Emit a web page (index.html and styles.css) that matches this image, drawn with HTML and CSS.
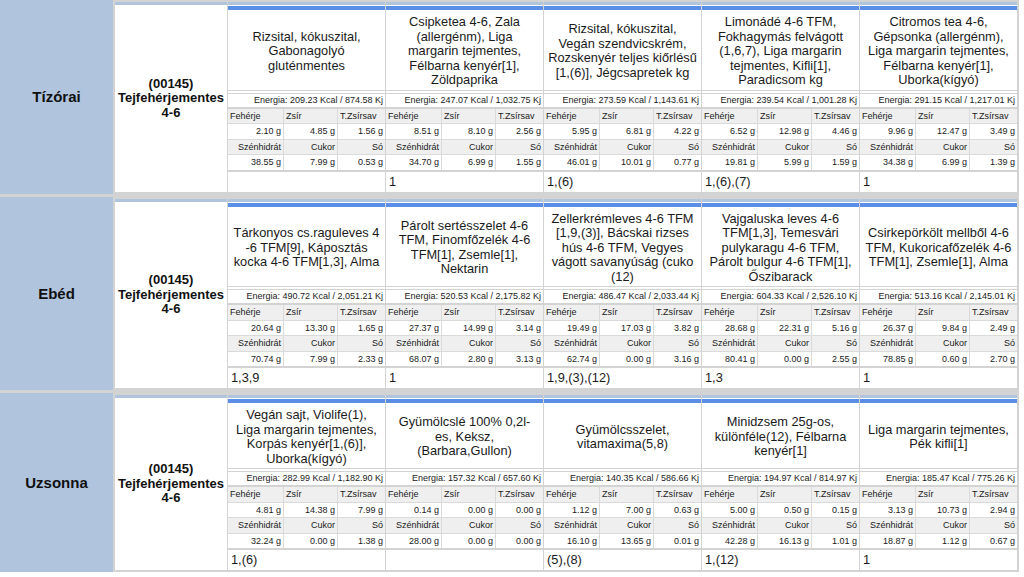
FILE: index.html
```html
<!DOCTYPE html>
<html lang="hu">
<head>
<meta charset="utf-8">
<title>Étlap</title>
<link rel="stylesheet" href="styles.css">
</head>
<body>
<div class="sheet">

  <section class="meal">
    <div class="meal-name">Tízórai</div>
    <div class="meal-body">
      <div class="cell group"><p>(00145)<br>Tejfehérjementes<br>4-6</p></div>

      <div class="cell menu">
        <div class="bar"></div>
        <div class="dish"><p>Rizsital, kókuszital,<br>Gabonagolyó<br>gluténmentes</p></div>
        <div class="energy">Energia: 209.23 Kcal / 874.58 Kj</div>
        <div class="nutr">
          <span class="h">Fehérje</span><span class="h">Zsír</span><span class="h">T.Zsírsav</span>
          <span class="v">2.10 g</span><span class="v">4.85 g</span><span class="v">1.56 g</span>
          <span class="h r">Szénhidrát</span><span class="h r">Cukor</span><span class="h r">Só</span>
          <span class="v">38.55 g</span><span class="v">7.99 g</span><span class="v">0.53 g</span>
        </div>
        <div class="allergen"></div>
      </div>

      <div class="cell menu">
        <div class="bar"></div>
        <div class="dish"><p>Csipketea 4-6, Zala<br>(allergénm), Liga<br>margarin tejmentes,<br>Félbarna kenyér[1],<br>Zöldpaprika</p></div>
        <div class="energy">Energia: 247.07 Kcal / 1,032.75 Kj</div>
        <div class="nutr">
          <span class="h">Fehérje</span><span class="h">Zsír</span><span class="h">T.Zsírsav</span>
          <span class="v">8.51 g</span><span class="v">8.10 g</span><span class="v">2.56 g</span>
          <span class="h r">Szénhidrát</span><span class="h r">Cukor</span><span class="h r">Só</span>
          <span class="v">34.70 g</span><span class="v">6.99 g</span><span class="v">1.55 g</span>
        </div>
        <div class="allergen">1</div>
      </div>

      <div class="cell menu">
        <div class="bar"></div>
        <div class="dish"><p>Rizsital, kókuszital,<br>Vegán szendvicskrém,<br>Rozskenyér teljes kiőrlésű<br>[1,(6)], Jégcsapretek kg</p></div>
        <div class="energy">Energia: 273.59 Kcal / 1,143.61 Kj</div>
        <div class="nutr">
          <span class="h">Fehérje</span><span class="h">Zsír</span><span class="h">T.Zsírsav</span>
          <span class="v">5.95 g</span><span class="v">6.81 g</span><span class="v">4.22 g</span>
          <span class="h r">Szénhidrát</span><span class="h r">Cukor</span><span class="h r">Só</span>
          <span class="v">46.01 g</span><span class="v">10.01 g</span><span class="v">0.77 g</span>
        </div>
        <div class="allergen">1,(6)</div>
      </div>

      <div class="cell menu">
        <div class="bar"></div>
        <div class="dish"><p>Limonádé 4-6 TFM,<br>Fokhagymás felvágott<br>(1,6,7), Liga margarin<br>tejmentes, Kifli[1],<br>Paradicsom kg</p></div>
        <div class="energy">Energia: 239.54 Kcal / 1,001.28 Kj</div>
        <div class="nutr">
          <span class="h">Fehérje</span><span class="h">Zsír</span><span class="h">T.Zsírsav</span>
          <span class="v">6.52 g</span><span class="v">12.98 g</span><span class="v">4.46 g</span>
          <span class="h r">Szénhidrát</span><span class="h r">Cukor</span><span class="h r">Só</span>
          <span class="v">19.81 g</span><span class="v">5.99 g</span><span class="v">1.59 g</span>
        </div>
        <div class="allergen">1,(6),(7)</div>
      </div>

      <div class="cell menu">
        <div class="bar"></div>
        <div class="dish"><p>Citromos tea 4-6,<br>Gépsonka (allergénm),<br>Liga margarin tejmentes,<br>Félbarna kenyér[1],<br>Uborka(kígyó)</p></div>
        <div class="energy">Energia: 291.15 Kcal / 1,217.01 Kj</div>
        <div class="nutr">
          <span class="h">Fehérje</span><span class="h">Zsír</span><span class="h">T.Zsírsav</span>
          <span class="v">9.96 g</span><span class="v">12.47 g</span><span class="v">3.49 g</span>
          <span class="h r">Szénhidrát</span><span class="h r">Cukor</span><span class="h r">Só</span>
          <span class="v">34.38 g</span><span class="v">6.99 g</span><span class="v">1.39 g</span>
        </div>
        <div class="allergen">1</div>
      </div>
    </div>
  </section>

  <section class="meal">
    <div class="meal-name">Ebéd</div>
    <div class="meal-body">
      <div class="cell group"><p>(00145)<br>Tejfehérjementes<br>4-6</p></div>

      <div class="cell menu">
        <div class="bar"></div>
        <div class="dish"><p>Tárkonyos cs.raguleves 4<br>-6 TFM[9], Káposztás<br>kocka 4-6 TFM[1,3], Alma</p></div>
        <div class="energy">Energia: 490.72 Kcal / 2,051.21 Kj</div>
        <div class="nutr">
          <span class="h">Fehérje</span><span class="h">Zsír</span><span class="h">T.Zsírsav</span>
          <span class="v">20.64 g</span><span class="v">13.30 g</span><span class="v">1.65 g</span>
          <span class="h r">Szénhidrát</span><span class="h r">Cukor</span><span class="h r">Só</span>
          <span class="v">70.74 g</span><span class="v">7.99 g</span><span class="v">2.33 g</span>
        </div>
        <div class="allergen">1,3,9</div>
      </div>

      <div class="cell menu">
        <div class="bar"></div>
        <div class="dish"><p>Párolt sertésszelet 4-6<br>TFM, Finomfőzelék 4-6<br>TFM[1], Zsemle[1],<br>Nektarin</p></div>
        <div class="energy">Energia: 520.53 Kcal / 2,175.82 Kj</div>
        <div class="nutr">
          <span class="h">Fehérje</span><span class="h">Zsír</span><span class="h">T.Zsírsav</span>
          <span class="v">27.37 g</span><span class="v">14.99 g</span><span class="v">3.14 g</span>
          <span class="h r">Szénhidrát</span><span class="h r">Cukor</span><span class="h r">Só</span>
          <span class="v">68.07 g</span><span class="v">2.80 g</span><span class="v">3.13 g</span>
        </div>
        <div class="allergen">1</div>
      </div>

      <div class="cell menu">
        <div class="bar"></div>
        <div class="dish"><p>Zellerkrémleves 4-6 TFM<br>[1,9,(3)], Bácskai rizses<br>hús 4-6 TFM, Vegyes<br>vágott savanyúság (cuko<br>(12)</p></div>
        <div class="energy">Energia: 486.47 Kcal / 2,033.44 Kj</div>
        <div class="nutr">
          <span class="h">Fehérje</span><span class="h">Zsír</span><span class="h">T.Zsírsav</span>
          <span class="v">19.49 g</span><span class="v">17.03 g</span><span class="v">3.82 g</span>
          <span class="h r">Szénhidrát</span><span class="h r">Cukor</span><span class="h r">Só</span>
          <span class="v">62.74 g</span><span class="v">0.00 g</span><span class="v">3.16 g</span>
        </div>
        <div class="allergen">1,9,(3),(12)</div>
      </div>

      <div class="cell menu">
        <div class="bar"></div>
        <div class="dish"><p>Vajgaluska leves 4-6<br>TFM[1,3], Temesvári<br>pulykaragu 4-6 TFM,<br>Párolt bulgur 4-6 TFM[1],<br>Őszibarack</p></div>
        <div class="energy">Energia: 604.33 Kcal / 2,526.10 Kj</div>
        <div class="nutr">
          <span class="h">Fehérje</span><span class="h">Zsír</span><span class="h">T.Zsírsav</span>
          <span class="v">28.68 g</span><span class="v">22.31 g</span><span class="v">5.16 g</span>
          <span class="h r">Szénhidrát</span><span class="h r">Cukor</span><span class="h r">Só</span>
          <span class="v">80.41 g</span><span class="v">0.00 g</span><span class="v">2.55 g</span>
        </div>
        <div class="allergen">1,3</div>
      </div>

      <div class="cell menu">
        <div class="bar"></div>
        <div class="dish"><p>Csirkepörkölt mellből 4-6<br>TFM, Kukoricafőzelék 4-6<br>TFM[1], Zsemle[1], Alma</p></div>
        <div class="energy">Energia: 513.16 Kcal / 2,145.01 Kj</div>
        <div class="nutr">
          <span class="h">Fehérje</span><span class="h">Zsír</span><span class="h">T.Zsírsav</span>
          <span class="v">26.37 g</span><span class="v">9.84 g</span><span class="v">2.49 g</span>
          <span class="h r">Szénhidrát</span><span class="h r">Cukor</span><span class="h r">Só</span>
          <span class="v">78.85 g</span><span class="v">0.60 g</span><span class="v">2.70 g</span>
        </div>
        <div class="allergen">1</div>
      </div>
    </div>
  </section>

  <section class="meal">
    <div class="meal-name">Uzsonna</div>
    <div class="meal-body">
      <div class="cell group"><p>(00145)<br>Tejfehérjementes<br>4-6</p></div>

      <div class="cell menu">
        <div class="bar"></div>
        <div class="dish"><p>Vegán sajt, Violife(1),<br>Liga margarin tejmentes,<br>Korpás kenyér[1,(6)],<br>Uborka(kígyó)</p></div>
        <div class="energy">Energia: 282.99 Kcal / 1,182.90 Kj</div>
        <div class="nutr">
          <span class="h">Fehérje</span><span class="h">Zsír</span><span class="h">T.Zsírsav</span>
          <span class="v">4.81 g</span><span class="v">14.38 g</span><span class="v">7.99 g</span>
          <span class="h r">Szénhidrát</span><span class="h r">Cukor</span><span class="h r">Só</span>
          <span class="v">32.24 g</span><span class="v">0.00 g</span><span class="v">1.38 g</span>
        </div>
        <div class="allergen">1,(6)</div>
      </div>

      <div class="cell menu">
        <div class="bar"></div>
        <div class="dish"><p>Gyümölcslé 100% 0,2l-<br>es, Keksz,<br>(Barbara,Gullon)</p></div>
        <div class="energy">Energia: 157.32 Kcal / 657.60 Kj</div>
        <div class="nutr">
          <span class="h">Fehérje</span><span class="h">Zsír</span><span class="h">T.Zsírsav</span>
          <span class="v">0.14 g</span><span class="v">0.00 g</span><span class="v">0.00 g</span>
          <span class="h r">Szénhidrát</span><span class="h r">Cukor</span><span class="h r">Só</span>
          <span class="v">28.00 g</span><span class="v">0.00 g</span><span class="v">0.00 g</span>
        </div>
        <div class="allergen"></div>
      </div>

      <div class="cell menu">
        <div class="bar"></div>
        <div class="dish"><p>Gyümölcsszelet,<br>vitamaxima(5,8)</p></div>
        <div class="energy">Energia: 140.35 Kcal / 586.66 Kj</div>
        <div class="nutr">
          <span class="h">Fehérje</span><span class="h">Zsír</span><span class="h">T.Zsírsav</span>
          <span class="v">1.12 g</span><span class="v">7.00 g</span><span class="v">0.63 g</span>
          <span class="h r">Szénhidrát</span><span class="h r">Cukor</span><span class="h r">Só</span>
          <span class="v">16.10 g</span><span class="v">13.65 g</span><span class="v">0.01 g</span>
        </div>
        <div class="allergen">(5),(8)</div>
      </div>

      <div class="cell menu">
        <div class="bar"></div>
        <div class="dish"><p>Minidzsem 25g-os,<br>különféle(12), Félbarna<br>kenyér[1]</p></div>
        <div class="energy">Energia: 194.97 Kcal / 814.97 Kj</div>
        <div class="nutr">
          <span class="h">Fehérje</span><span class="h">Zsír</span><span class="h">T.Zsírsav</span>
          <span class="v">5.00 g</span><span class="v">0.50 g</span><span class="v">0.15 g</span>
          <span class="h r">Szénhidrát</span><span class="h r">Cukor</span><span class="h r">Só</span>
          <span class="v">42.28 g</span><span class="v">16.13 g</span><span class="v">1.01 g</span>
        </div>
        <div class="allergen">1,(12)</div>
      </div>

      <div class="cell menu">
        <div class="bar"></div>
        <div class="dish"><p>Liga margarin tejmentes,<br>Pék kifli[1]</p></div>
        <div class="energy">Energia: 185.47 Kcal / 775.26 Kj</div>
        <div class="nutr">
          <span class="h">Fehérje</span><span class="h">Zsír</span><span class="h">T.Zsírsav</span>
          <span class="v">3.13 g</span><span class="v">10.73 g</span><span class="v">2.94 g</span>
          <span class="h r">Szénhidrát</span><span class="h r">Cukor</span><span class="h r">Só</span>
          <span class="v">18.87 g</span><span class="v">1.12 g</span><span class="v">0.67 g</span>
        </div>
        <div class="allergen">1</div>
      </div>
    </div>
  </section>

</div>
</body>
</html>
```

FILE: styles.css
```css
* { box-sizing: border-box; }

body {
  margin: 0;
  background: #ffffff;
  font-family: "Liberation Sans", Arial, sans-serif;
  color: #1a1a1a;
}

p { margin: 0; }

.sheet {
  width: 1019px;
  background: #d3d3d3;
  display: flex;
  flex-direction: column;
  gap: 3px;
}

.meal {
  display: grid;
  grid-template-columns: 113px 1fr;
  column-gap: 2px;
}

.meal-name {
  background: #b0c4de;
  display: flex;
  align-items: center;
  justify-content: center;
  font-weight: bold;
  font-size: 15px;
  color: #111;
}

.meal-body {
  display: grid;
  grid-template-columns: 112px repeat(5, 157px);
  column-gap: 1px;
  padding: 2px 2px 2px 0;
}

.cell {
  background: #ffffff;
  border-top: 3px solid #b0c4de;
  display: flex;
  flex-direction: column;
}

.group {
  align-items: center;
  justify-content: center;
  text-align: center;
  font-weight: bold;
  font-size: 13px;
  line-height: 14.5px;
  color: #111;
}

.bar {
  height: 4px;
  margin-top: 1px;
  background: #5b8ee7;
}

.dish {
  flex: 1;
  display: flex;
  align-items: center;
  justify-content: center;
  text-align: center;
  white-space: nowrap;
  font-size: 12.8px;
  line-height: 14.5px;
  padding: 5px 0 2px;
  border-bottom: 1px solid #d3d3d3;
}

.energy {
  margin-top: 2px;
  border-top: 1px solid #d3d3d3;
  border-bottom: 2px solid #d3d3d3;
  height: 16px;
  font-size: 9px;
  line-height: 13px;
  text-align: right;
  padding-right: 2px;
  white-space: nowrap;
  overflow: hidden;
}

.nutr {
  display: grid;
  grid-template-columns: 55px 53px 1fr;
  gap: 1px;
  background: #dadada;
  font-size: 9px;
}

.nutr span {
  height: 14.5px;
  line-height: 14.5px;
  padding: 0 2px;
  white-space: nowrap;
}

.nutr .h { background: #efefef; }
.nutr .v { background: #ffffff; text-align: right; }
.nutr .r { text-align: right; }

.allergen {
  border-top: 2px solid #d3d3d3;
  height: 22px;
  font-size: 12.8px;
  line-height: 20px;
  padding-left: 3px;
}
```
